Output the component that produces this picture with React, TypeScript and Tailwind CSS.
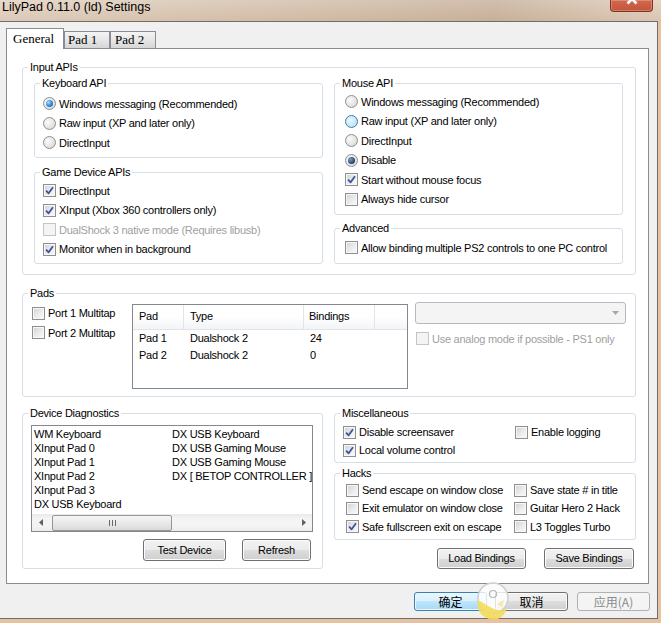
import React from "react";

type CB = { checked?: boolean; disabled?: boolean };

function Check({ checked = false, disabled = false }: CB) {
  return (
    <span
      className={
        "relative flex h-[13px] w-[13px] shrink-0 items-center justify-center border " +
        (disabled
          ? "border-[#c5c5c5] bg-[#f4f4f4]"
          : "border-[#8f8f8f] bg-[linear-gradient(135deg,#cdd0d4_0%,#ebecee_55%,#fbfbfb_100%)] shadow-[inset_0_0_0_1px_#f7f7f7]")
      }
    >
      {checked && (
        <svg width="9" height="9" viewBox="0 0 9 9" className="block">
          <path d="M1.1 4.6 L3.6 7.3 L8 1.2" fill="none" stroke="#3d5499" strokeWidth="1.8" strokeLinejoin="round" />
        </svg>
      )}
    </span>
  );
}

type RB = { checked?: boolean; hover?: boolean; dark?: boolean };

function Radio({ checked = false, hover = false, dark = false }: RB) {
  return (
    <span
      className={
        "flex h-[13px] w-[13px] shrink-0 items-center justify-center rounded-full border " +
        (hover
          ? "border-[#3c7fb1] bg-[radial-gradient(circle_at_40%_40%,#eef8fe_0%,#bfe3f7_70%,#a6d5f1_100%)]"
          : "border-[#8e8f8f] bg-[radial-gradient(circle_at_35%_35%,#fbfbfb_0%,#e3e3e3_60%,#cfcfcf_100%)]")
      }
    >
      {checked && (
        <span
          className={
            "block h-[7px] w-[7px] rounded-full " +
            (dark
              ? "bg-[radial-gradient(circle_at_35%_35%,#7f9cc0_0%,#2a4a78_60%,#1b3157_100%)]"
              : "bg-[radial-gradient(circle_at_35%_35%,#a9dcfb_0%,#2f86d6_55%,#19569e_100%)]")
          }
        />
      )}
    </span>
  );
}

function CheckRow({
  label,
  checked,
  disabled,
  className = "h-[19.5px]",
}: {
  label: string;
  checked?: boolean;
  disabled?: boolean;
  className?: string;
}) {
  return (
    <div className={"flex items-center gap-[3px] whitespace-nowrap " + className}>
      <Check checked={checked} disabled={disabled} />
      <span className={disabled ? "text-[#a0a0a0]" : ""}>{label}</span>
    </div>
  );
}

function RadioRow({ label, checked, hover, dark }: { label: string } & RB) {
  return (
    <div className="flex h-[19.5px] items-center gap-[3px] whitespace-nowrap">
      <Radio checked={checked} hover={hover} dark={dark} />
      <span>{label}</span>
    </div>
  );
}

function Group({
  label,
  className = "",
  children,
}: {
  label: string;
  className?: string;
  children?: React.ReactNode;
}) {
  return (
    <div className={"relative shrink-0 rounded-[3px] border border-[#d5dfe5] " + className}>
      <span className="absolute left-[5px] top-[-8px] whitespace-nowrap bg-white px-[2px] leading-[14px]">{label}</span>
      {children}
    </div>
  );
}

function Btn({ children, className = "" }: { children: React.ReactNode; className?: string }) {
  return (
    <div
      className={
        "flex shrink-0 items-center justify-center rounded-[3px] border border-[#707070] bg-[linear-gradient(180deg,#f2f2f2_0%,#ebebeb_50%,#dddddd_50%,#cfcfcf_100%)] shadow-[inset_0_0_0_1px_#fbfbfb] " +
        className
      }
    >
      {children}
    </div>
  );
}

const diagLeft = ["WM Keyboard", "XInput Pad 0", "XInput Pad 1", "XInput Pad 2", "XInput Pad 3", "DX USB Keyboard"];
const diagRight = ["DX USB Keyboard", "DX USB Gaming Mouse", "DX USB Gaming Mouse", "DX [ BETOP CONTROLLER ]"];

export default function App() {
  return (
    <div className="relative flex h-[623px] w-[661px] flex-col overflow-hidden bg-[#e6c2a2] font-['Liberation_Sans',Arial,sans-serif] text-[11px] tracking-[-0.25px] text-black">
      {/* Title bar */}
      <div className="flex h-[21px] shrink-0 items-start justify-between bg-[linear-gradient(90deg,rgba(255,255,255,0.12)_0%,rgba(110,80,50,0.10)_55%,rgba(110,80,50,0.16)_75%,rgba(255,255,255,0.05)_100%),linear-gradient(180deg,#e4d4c4_0%,#d8c2ad_100%)]">
        <span className="pl-[2px] text-[12.5px] leading-[15px] tracking-normal">LilyPad 0.11.0 (ld) Settings</span>
        <div className="relative mr-[8px] h-[12px] w-[43px] overflow-hidden rounded-b-[4px] border border-t-0 border-[#7d3424] bg-[linear-gradient(180deg,#cf6a50_0%,#c4543b_100%)] shadow-[inset_0_0_0_1px_rgba(255,200,180,0.35)]">
          <svg className="absolute left-[15px] top-[-7px]" width="12" height="12" viewBox="0 0 12 12">
            <path d="M1.5 1.5 L10.5 10.5 M10.5 1.5 L1.5 10.5" stroke="#ffffff" strokeWidth="2.6" />
          </svg>
        </div>
      </div>

      <div className="flex h-[598px] shrink-0">
        <div className="flex h-[598px] w-[658px] shrink-0 flex-col border-y border-r border-[#6e6e6e] bg-[#f0f0f0]">
          {/* Tabs */}
          <div className="ml-[6px] mt-[6px] flex h-[20px] shrink-0 items-end font-['Liberation_Serif',serif] text-[13px] tracking-normal">
            <div className="relative z-10 -mb-px h-[21px] w-[58px] border border-b-0 border-[#898c95] bg-white pl-[6px] leading-[19px]">
              General
            </div>
            <div className="h-[17px] w-[46px] border border-b-0 border-[#898c95] bg-[linear-gradient(180deg,#f4f4f4_0%,#e6e6e6_50%,#d6d6d6_100%)] pl-[3px] leading-[16px]">
              Pad 1
            </div>
            <div className="h-[17px] w-[46px] border border-b-0 border-[#898c95] bg-[linear-gradient(180deg,#f4f4f4_0%,#e6e6e6_50%,#d6d6d6_100%)] pl-[4px] leading-[16px]">
              Pad 2
            </div>
          </div>

          {/* Panel */}
          <div className="ml-[6px] h-[536px] w-[643px] shrink-0 border border-[#898c95] bg-white pl-[15px] pt-[18px]">
            {/* Input APIs */}
            <Group label="Input APIs" className="flex h-[208px] w-[614px] gap-[11px] pl-[11px] pt-[15px]">
              <div className="flex w-[289px] flex-col gap-[14px]">
                <Group label="Keyboard API" className="h-[75px] w-[289px] pl-[8px] pt-[10px]">
                  <RadioRow label="Windows messaging (Recommended)" checked />
                  <RadioRow label="Raw input (XP and later only)" />
                  <RadioRow label="DirectInput" />
                </Group>
                <Group label="Game Device APIs" className="h-[92px] w-[289px] pl-[8px] pt-[8px]">
                  <CheckRow label="DirectInput" checked />
                  <CheckRow label="XInput (Xbox 360 controllers only)" checked />
                  <CheckRow label="DualShock 3 native mode (Requires libusb)" disabled />
                  <CheckRow label="Monitor when in background" checked />
                </Group>
              </div>
              <div className="flex w-[289px] flex-col gap-[13px]">
                <Group label="Mouse API" className="h-[132px] w-[289px] pl-[10px] pt-[8px]">
                  <RadioRow label="Windows messaging (Recommended)" />
                  <RadioRow label="Raw input (XP and later only)" hover />
                  <RadioRow label="DirectInput" />
                  <RadioRow label="Disable" checked dark />
                  <CheckRow label="Start without mouse focus" checked />
                  <CheckRow label="Always hide cursor" />
                </Group>
                <Group label="Advanced" className="h-[36px] w-[289px] pl-[10px] pt-[9px]">
                  <CheckRow label="Allow binding multiple PS2 controls to one PC control" />
                </Group>
              </div>
            </Group>

            {/* Pads */}
            <Group label="Pads" className="mt-[18px] flex h-[104px] w-[614px] items-start pl-[9px]">
              <div className="mt-[9.5px] w-[100px]">
                <CheckRow label="Port 1 Multitap" />
                <CheckRow label="Port 2 Multitap" />
              </div>
              <div className="mt-[10px] h-[85px] w-[276px] shrink-0 border border-[#828790] bg-white">
                <div className="flex h-[25px] border-b border-[#e2e3e6] bg-[linear-gradient(180deg,#ffffff_0%,#ffffff_45%,#f3f4f6_100%)] leading-[23px]">
                  <div className="w-[51px] border-r border-[#e3e4e7] pl-[6px]">Pad</div>
                  <div className="w-[120px] border-r border-[#e3e4e7] pl-[6px]">Type</div>
                  <div className="w-[71px] border-r border-[#e3e4e7] pl-[5px]">Bindings</div>
                  <div className="flex-1" />
                </div>
                <div className="flex h-[17px] items-center">
                  <div className="w-[51px] pl-[6px]">Pad 1</div>
                  <div className="w-[120px] pl-[6px]">Dualshock 2</div>
                  <div className="w-[71px] pl-[6px]">24</div>
                </div>
                <div className="flex h-[17px] items-center">
                  <div className="w-[51px] pl-[6px]">Pad 2</div>
                  <div className="w-[120px] pl-[6px]">Dualshock 2</div>
                  <div className="w-[71px] pl-[6px]">0</div>
                </div>
              </div>
              <div className="ml-[7px] mt-[8px] w-[211px] shrink-0">
                <div className="flex h-[22px] items-center justify-end rounded-[3px] border border-[#b6babe] bg-[#f4f4f4] pr-[6px]">
                  <svg width="7" height="4" viewBox="0 0 7 4">
                    <path d="M0 0 L7 0 L3.5 4 Z" fill="#a8a8a8" />
                  </svg>
                </div>
                <CheckRow label="Use analog mode if possible - PS1 only" disabled className="mt-[5px] h-[19.5px] pl-[1px]" />
              </div>
            </Group>

            {/* Bottom row */}
            <div className="mt-[16px] flex gap-[11px]">
              <Group label="Device Diagnostics" className="h-[156px] w-[301px] pl-[8px] pt-[11px]">
                <div className="flex h-[107px] w-[282px] flex-col border border-[#828790] bg-white">
                  <div className="flex h-[88px] pl-[2px] pt-[1px]">
                    <div className="w-[143px]">
                      {diagLeft.map((t, i) => (
                        <div key={i} className="h-[14px] whitespace-nowrap leading-[14px]">
                          {t}
                        </div>
                      ))}
                    </div>
                    <div>
                      {diagRight.map((t, i) => (
                        <div key={i} className="h-[14px] whitespace-nowrap leading-[14px]">
                          {t}
                        </div>
                      ))}
                    </div>
                  </div>
                  <div className="flex h-[17px] items-center bg-[linear-gradient(180deg,#e9e9e9_0%,#f4f4f4_30%,#f4f4f4_70%,#ececec_100%)]">
                    <div className="flex h-[17px] w-[17px] items-center justify-center">
                      <svg width="4" height="7" viewBox="0 0 4 7">
                        <path d="M4 0 L4 7 L0 3.5 Z" fill="#606060" />
                      </svg>
                    </div>
                    <div className="ml-[3px] flex h-[16px] w-[120px] items-center justify-center self-end rounded-[2px] border border-[#979797] bg-[linear-gradient(180deg,#f6f6f6_0%,#e9e9e9_50%,#dadada_100%)]">
                      <svg width="7" height="6" viewBox="0 0 7 6">
                        <path d="M0.5 0 V6 M3.5 0 V6 M6.5 0 V6" stroke="#6a6a6a" strokeWidth="1" />
                      </svg>
                    </div>
                    <div className="flex-1" />
                    <div className="flex h-[17px] w-[17px] items-center justify-center">
                      <svg width="4" height="7" viewBox="0 0 4 7">
                        <path d="M0 0 L0 7 L4 3.5 Z" fill="#606060" />
                      </svg>
                    </div>
                  </div>
                </div>
                <div className="mt-[7px] flex">
                  <Btn className="ml-[112px] h-[22px] w-[83px]">Test Device</Btn>
                  <Btn className="ml-[16px] h-[22px] w-[69px]">Refresh</Btn>
                </div>
              </Group>

              <div className="flex w-[302px] flex-col">
                <Group label="Miscellaneous" className="h-[50px] w-[302px] pl-[8px] pt-[9px]">
                  <div className="flex">
                    <CheckRow label="Disable screensaver" checked className="h-[18px] w-[172px]" />
                    <CheckRow label="Enable logging" className="h-[18px]" />
                  </div>
                  <CheckRow label="Local volume control" checked className="h-[18px]" />
                </Group>
                <Group label="Hacks" className="mt-[10px] h-[67px] w-[302px] pl-[11px] pt-[7px]">
                  <div className="flex">
                    <CheckRow label="Send escape on window close" className="h-[18.33px] w-[168px]" />
                    <CheckRow label="Save state # in title" className="h-[18.33px]" />
                  </div>
                  <div className="flex">
                    <CheckRow label="Exit emulator on window close" className="h-[18.33px] w-[168px]" />
                    <CheckRow label="Guitar Hero 2 Hack" className="h-[18.33px]" />
                  </div>
                  <div className="flex">
                    <CheckRow label="Safe fullscreen exit on escape" checked className="h-[18.33px] w-[168px]" />
                    <CheckRow label="L3 Toggles Turbo" className="h-[18.33px]" />
                  </div>
                </Group>
                <div className="mt-[8px] flex">
                  <Btn className="ml-[103px] h-[21px] w-[89px]">Load Bindings</Btn>
                  <Btn className="ml-[18px] h-[21px] w-[90px]">Save Bindings</Btn>
                </div>
              </div>
            </div>
          </div>

          {/* Dialog buttons */}
          <div className="mt-[8px] flex h-[19px] font-['Noto_Sans_CJK_SC',sans-serif] text-[12px] tracking-normal">
            <div className="ml-[414px] flex h-[19px] w-[73px] items-center justify-center rounded-[3px] border border-[#3c7fb1] bg-[linear-gradient(180deg,#eaf6fd_0%,#d9f0fc_50%,#bee6fd_50%,#a7d9f5_100%)] shadow-[inset_0_0_0_1px_#e8f6fd] leading-none">
              确定
            </div>
            <Btn className="ml-[8px] h-[19px] w-[73px] leading-none">取消</Btn>
            <div className="ml-[9px] flex h-[19px] w-[73px] items-center justify-center rounded-[3px] border border-[#adb2b5] bg-[#f4f4f4] leading-none text-[#8a8a8a]">
              应用(A)
            </div>
          </div>
        </div>
      </div>

      {/* watermark overlay */}
      <svg className="absolute left-[475px] top-[582px]" width="38" height="40" viewBox="0 0 38 40">
        <circle cx="18" cy="16" r="15" fill="#ffffff" fillOpacity="0.8" stroke="#cfcfcf" strokeWidth="1.5" />
        <circle cx="18" cy="12" r="3.5" fill="none" stroke="#b5b5b5" strokeWidth="1.2" />
        <path d="M3 18 Q1 33 14 37 Q28 40 32 26 Q26 30 19 27 Q11 23 3 18 Z" fill="#f3dc5b" fillOpacity="0.9" />
        <path d="M22 22 L29 18 L27 25 Z" fill="#f6e89a" fillOpacity="0.9" />
      </svg>
    </div>
  );
}
